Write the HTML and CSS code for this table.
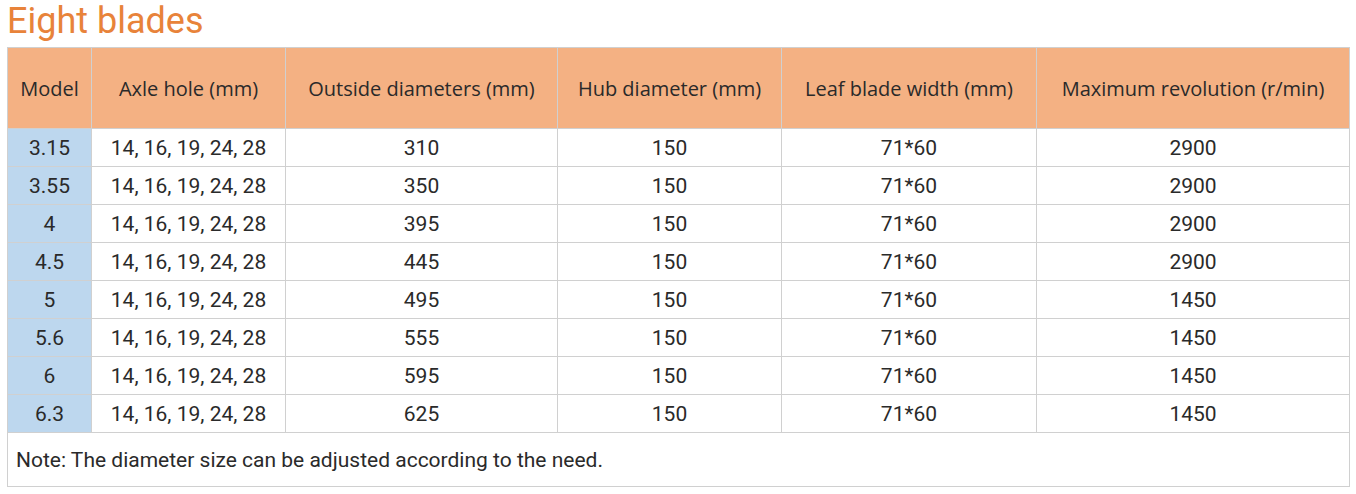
FILE: index.html
```html
<!DOCTYPE html>
<html>
<head>
<meta charset="utf-8">
<link rel="stylesheet" href="styles.css">
</head>
<body>
<div class="page">
  <h1 class="title">Eight blades</h1>
  <table class="spec">
    <colgroup>
      <col class="c1"><col class="c2"><col class="c3"><col class="c4"><col class="c5"><col class="c6">
    </colgroup>
    <thead>
      <tr>
        <th>Model</th>
        <th>Axle hole (mm)</th>
        <th>Outside diameters (mm)</th>
        <th>Hub diameter (mm)</th>
        <th>Leaf blade width (mm)</th>
        <th>Maximum revolution (r/min)</th>
      </tr>
    </thead>
    <tbody>
      <tr><td class="model">3.15</td><td>14, 16, 19, 24, 28</td><td>310</td><td>150</td><td>71*60</td><td>2900</td></tr>
      <tr><td class="model">3.55</td><td>14, 16, 19, 24, 28</td><td>350</td><td>150</td><td>71*60</td><td>2900</td></tr>
      <tr><td class="model">4</td><td>14, 16, 19, 24, 28</td><td>395</td><td>150</td><td>71*60</td><td>2900</td></tr>
      <tr><td class="model">4.5</td><td>14, 16, 19, 24, 28</td><td>445</td><td>150</td><td>71*60</td><td>2900</td></tr>
      <tr><td class="model">5</td><td>14, 16, 19, 24, 28</td><td>495</td><td>150</td><td>71*60</td><td>1450</td></tr>
      <tr><td class="model">5.6</td><td>14, 16, 19, 24, 28</td><td>555</td><td>150</td><td>71*60</td><td>1450</td></tr>
      <tr><td class="model">6</td><td>14, 16, 19, 24, 28</td><td>595</td><td>150</td><td>71*60</td><td>1450</td></tr>
      <tr><td class="model">6.3</td><td>14, 16, 19, 24, 28</td><td>625</td><td>150</td><td>71*60</td><td>1450</td></tr>
      <tr><td class="note" colspan="6">Note: The diameter size can be adjusted according to the need.</td></tr>
    </tbody>
  </table>
</div>
</body>
</html>
```

FILE: styles.css
```css
html, body {
  margin: 0;
  padding: 0;
  background: #ffffff;
}
.page {
  padding: 0 7px;
  font-family: Roboto, "Liberation Sans", sans-serif;
  color: #333333;
}
.title {
  margin: 0;
  height: 47px;
  font-size: 36px;
  line-height: 43px;
  font-weight: 400;
  color: #e8833a;
}
.spec {
  border-collapse: collapse;
  table-layout: fixed;
  width: 1343px;
  font-size: 21px;
}
.c1 { width: 84px; }
.c2 { width: 194px; }
.c3 { width: 272px; }
.c4 { width: 224px; }
.c5 { width: 255px; }
.c6 { width: 313px; }
.spec th,
.spec td {
  border: 1px solid #d0d0d0;
  text-align: center;
  padding: 0;
  font-weight: 400;
  white-space: nowrap;
  overflow: hidden;
}
.spec th {
  background: #f4b183;
  height: 80px;
  font-family: "Open Sans", "Liberation Sans", sans-serif;
  font-size: 20px;
  color: #2a2a2a;
}
.spec td {
  height: 37px;
  color: #2a2a2a;
}
.spec td.model {
  background: #bdd7ee;
}
.spec td.note {
  text-align: left;
  height: 53px;
  padding-left: 8px;
}
```
